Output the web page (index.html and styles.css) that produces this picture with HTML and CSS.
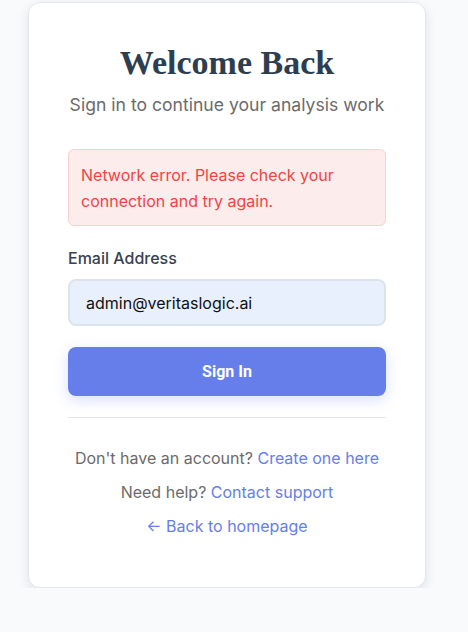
FILE: index.html
```html
<!DOCTYPE html>
<html>
<head>
<meta charset="utf-8">
<link rel="stylesheet" href="styles.css">
</head>
<body>
<div class="page">
  <div class="card">
    <h1 class="title">Welcome Back</h1>
    <p class="subtitle">Sign in to continue your analysis work</p>
    <div class="error">Network error. Please check your connection and try again.</div>
    <label class="label">Email Address</label>
    <div class="input">admin@veritaslogic.ai</div>
    <button class="btn">Sign In</button>
    <div class="divider"></div>
    <div class="links">
      <p class="line">Don't have an account? <a class="link">Create one here</a></p>
      <p class="line">Need help? <a class="link">Contact support</a></p>
      <p class="line"><a class="link">← Back to homepage</a></p>
    </div>
  </div>
</div>
</body>
</html>
```
FILE: styles.css
```css
html, body {
  margin: 0;
  padding: 0;
  background: #f8fafc;
  font-family: Inter, "Noto Sans", sans-serif;
}
.page {
  padding: 2px 0 0 28px;
}
.card {
  box-sizing: border-box;
  width: 398px;
  background: #ffffff;
  border: 1px solid #e5e7eb;
  border-radius: 12px;
  box-shadow: 0 4px 12px rgba(15, 23, 42, 0.10);
  padding: 40px 39px 49px;
}
.title {
  margin: 0;
  text-align: center;
  font-family: "Liberation Serif", "DejaVu Serif", serif;
  font-weight: 700;
  font-size: 34px;
  line-height: 40px;
  color: #2c3e50;
}
.subtitle {
  margin: 10px 0 0;
  text-align: center;
  font-size: 17.6px;
  line-height: 24px;
  color: #6b6b6b;
}
.error {
  margin-top: 32px;
  background: #fdecec;
  border: 1px solid #fbd0d0;
  border-radius: 6px;
  padding: 12px 12px 11px;
  color: #ef4444;
  font-size: 16px;
  line-height: 26px;
}
.label {
  display: block;
  margin-top: 22px;
  font-size: 16px;
  line-height: 20px;
  color: #374151;
  font-weight: 500;
}
.input {
  margin-top: 11px;
  height: 47px;
  box-sizing: border-box;
  background: #e8f0fe;
  border: 2px solid #dde3ec;
  border-radius: 8px;
  padding: 0 16px;
  display: flex;
  align-items: center;
  font-size: 16px;
  color: #111111;
}
.btn {
  display: block;
  width: 100%;
  margin-top: 21px;
  height: 49px;
  border: none;
  border-radius: 8px;
  background: #667eea;
  color: #ffffff;
  font-family: Roboto, "Liberation Sans", sans-serif;
  font-weight: 700;
  font-size: 16px;
  box-shadow: 0 4px 14px rgba(102, 126, 234, 0.25);
}
.divider {
  margin-top: 21px;
  height: 1px;
  background: #e5e7eb;
}
.links {
  margin-top: 28px;
  text-align: center;
}
.line {
  margin: 0 0 10px;
  font-size: 16px;
  line-height: 24px;
  color: #6b6b6b;
}
.line:last-child {
  margin-bottom: 0;
}
.link {
  color: #667eea;
  text-decoration: none;
}
```
